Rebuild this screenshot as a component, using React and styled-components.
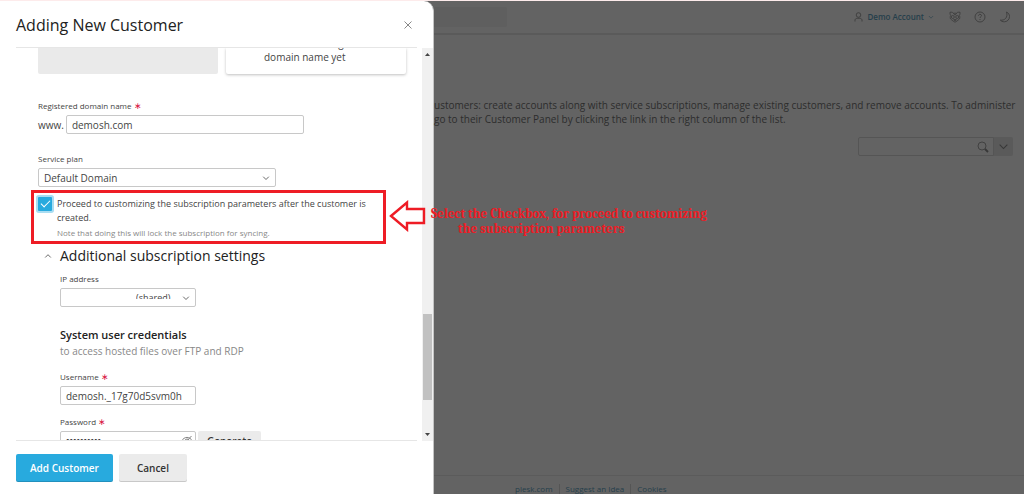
import styled, { createGlobalStyle } from 'styled-components';

const GlobalStyle = createGlobalStyle`
  * {
    box-sizing: border-box;
  }

  body {
    margin: 0;
    background-color: #636363;
    color: #444;
    font-family: 'Open Sans', 'Noto Sans', sans-serif;
    font-size: 10px;
    line-height: 14px;
  }

  h1, h2, h3, p {
    margin: 0;
    font-weight: 400;
  }

  button, input, select {
    font: inherit;
    color: inherit;
  }
`;

const StyledScreen = styled.div`
  display: flex;
  height: 100vh;
  overflow: hidden;
  border-top: 1px solid #fdebeb;
`;

/* drawer */

const StyledDrawer = styled.section`
  display: flex;
  flex-direction: column;
  flex: 0 0 434px;
  min-width: 0;
  background-color: #fff;
  border-right: 1px solid #c4c4c4;
  border-top-right-radius: 10px;
`;

const StyledDrawerHeader = styled.header`
  display: flex;
  justify-content: space-between;
  align-items: center;
  height: 47px;
  margin: 0 16px;
  padding-top: 2px;
  border-bottom: 1px solid #e6e6e6;
`;

const StyledDrawerTitle = styled.h1`
  font-size: 16px;
  line-height: 24px;
  color: #222;
`;

const StyledCloseButton = styled.button`
  display: flex;
  padding: 4px;
  border: none;
  background: none;
  color: #888;
`;

const StyledDrawerBody = styled.div`
  display: flex;
  flex: 1;
  min-height: 0;
`;

const StyledScrollArea = styled.div`
  display: flex;
  flex-direction: column;
  flex: 1;
  min-width: 0;
  margin-left: 16px;
  overflow: hidden;
  border-bottom: 1px solid #e6e6e6;
`;

const StyledScrollbar = styled.div`
  display: flex;
  flex-direction: column;
  align-items: center;
  width: 11px;
  margin-left: 5px;
  background-color: #f0f0f0;
`;

const StyledScrollTriangle = styled.svg`
  flex: none;
  width: 11px;
  height: 13px;
  fill: #444;
`;

const StyledScrollTrack = styled.div`
  flex: 1;
  display: grid;
  grid-template-rows: 253fr 86fr 28fr;
  width: 9px;
`;

const StyledScrollThumb = styled.div`
  grid-row: 2;
  background-color: #c1c1c1;
`;

const StyledCards = styled.div`
  display: flex;
  flex: none;
  gap: 8px;
  height: 26px;
  padding: 0 11px 0 22px;
`;

const StyledCard = styled.div`
  flex: 1;
  min-width: 0;
  display: flex;
  flex-direction: column;
  justify-content: flex-end;
  padding: 0 0 10px 38px;
  white-space: nowrap;
  border-radius: 0 0 2px 2px;
  background-color: ${({ $selected }) => ($selected ? '#eaeaea' : '#fff')};
  box-shadow: ${({ $selected }) =>
    $selected ? 'none' : '0 1px 3px rgba(0, 0, 0, 0.25)'};
`;

const StyledForm = styled.div`
  display: flex;
  flex-direction: column;
  flex: none;
  padding: 24px 11px 0 22px;
`;

const StyledField = styled.div`
  display: flex;
  flex-direction: column;
  align-items: flex-start;
  gap: 1px;
  margin-bottom: ${({ $gap }) => $gap || 0}px;
`;

const StyledLabel = styled.label`
  font-size: 8px;
  line-height: 16px;
`;

const StyledAsterisk = styled.span`
  font-size: 9px;
  line-height: 8px;
  color: #d8123f;
`;

const StyledInputRow = styled.div`
  display: flex;
  align-items: center;
  gap: 2px;
`;

const StyledInput = styled.input`
  width: ${({ $width }) => $width}px;
  height: 19px;
  padding: 0 5px;
  border: 1px solid #c8c8c8;
  border-radius: 2px;
  background-color: #fff;
  outline: none;
`;

const StyledPasswordInput = styled(StyledInput)`
  font-family: 'Liberation Sans', sans-serif;
  font-size: 10px;
  color: #222;
`;

const StyledSelectBox = styled.div`
  display: grid;
  align-items: center;
  width: ${({ $width }) => $width}px;

  > * {
    grid-area: 1 / 1;
  }

  > svg {
    justify-self: end;
    margin-right: 6px;
    pointer-events: none;
  }
`;

const StyledSelect = styled.select`
  appearance: none;
  width: 100%;
  height: 19px;
  padding: 0 5px;
  border: 1px solid #c8c8c8;
  border-radius: 2px;
  background-color: #fff;
`;

const StyledSharedSelect = styled(StyledSelect)`
  padding-left: 75px;
  font-size: 9px;
`;

/* blanks out the lower half of the address */
const StyledRedaction = styled.span`
  display: grid;
  justify-self: start;
  grid-template-rows: 5px 3px;
  width: 38px;
  margin-left: 74px;
  pointer-events: none;

  &::before {
    content: '';
    grid-row: 2;
    background-color: #fff;
  }
`;

const StyledHighlight = styled.div`
  display: flex;
  gap: 5px;
  margin: 3px 20px 0 -7px;
  padding: 4px 0 0 4px;
  height: 54px;
  border: 3px solid #ee1c25;
`;

const StyledCheckbox = styled.input`
  appearance: none;
  display: grid;
  place-items: center;
  flex: none;
  width: 14px;
  height: 14px;
  margin: 0;
  border-radius: 1px;
  background-color: #28aade;
  box-shadow: 0 0 0 2px #a9ddf2;

  &::before {
    content: '';
    width: 8px;
    height: 4px;
    margin-bottom: 3px;
    border-left: 1px solid #fff;
    border-bottom: 1px solid #fff;
    transform: rotate(-45deg);
  }
`;

const StyledCheckboxText = styled.label`
  flex: 1;
  font-size: 9px;
  line-height: 14px;
`;

const StyledNote = styled.span`
  display: block;
  font-size: 8px;
  line-height: 16px;
  color: #888;
`;

const StyledSectionToggle = styled.button`
  display: flex;
  align-items: center;
  gap: 8px;
  padding: 0 0 0 6px;
  border: none;
  background: none;
`;

const StyledSectionTitle = styled.h2`
  font-size: 14px;
  line-height: 24px;
  font-weight: 500;
  color: #222;
`;

const StyledSection = styled.div`
  display: flex;
  flex-direction: column;
  padding: 3px 0 0 22px;
`;

const StyledSubtitle = styled.h3`
  font-size: 11px;
  line-height: 16px;
  font-weight: 600;
  color: #222;
`;

const StyledHint = styled.p`
  margin-bottom: 10px;
  line-height: 16px;
  color: #888;
`;

const StyledPassword = styled.div`
  display: grid;
  align-items: center;

  > * {
    grid-area: 1 / 1;
  }

  > svg {
    justify-self: end;
    margin-right: 3px;
  }
`;

const StyledDrawerFooter = styled.footer`
  display: flex;
  gap: 6px;
  padding: 13px 16px 12px;
`;

const StyledButton = styled.button`
  height: 28px;
  padding: 0 ${({ $primary }) => ($primary ? 14 : 18)}px;
  border: none;
  border-radius: 2px;
  font-weight: 600;
  color: ${({ $primary }) => ($primary ? '#fff' : '#333')};
  background-color: ${({ $primary }) => ($primary ? '#28aade' : '#ebebeb')};
  box-shadow: inset 0 -1px rgba(0, 0, 0, 0.15);
`;

const StyledSmallButton = styled(StyledButton)`
  height: 19px;
  padding: 0 9px;
`;

/* page behind the drawer */

const StyledPage = styled.div`
  display: flex;
  flex-direction: column;
  flex: 1;
  min-width: 0;
  color: #2d2d2d;
`;

const StyledTopBar = styled.header`
  display: flex;
  justify-content: space-between;
  align-items: center;
  height: 34px;
  padding-right: 13px;
  border-bottom: 2px solid #5a5a5a;
`;

const StyledTopSearch = styled.input`
  width: 73px;
  height: 20px;
  border: none;
  border-radius: 0 2px 2px 0;
  background-color: #5f5f5f;
`;

const StyledTopActions = styled.div`
  display: flex;
  align-items: center;
  gap: 13px;
`;

const StyledAccountButton = styled.button`
  display: flex;
  align-items: center;
  gap: 4px;
  padding: 0 2px 0 0;
  border: none;
  background: none;
  font-size: 8px;
  font-weight: 600;
  color: #263f4b;
`;

const StyledIconButton = styled.button`
  display: flex;
  padding: 0;
  border: none;
  background: none;
  color: #383838;
`;

const StyledMain = styled.main`
  display: flex;
  flex-direction: column;
  flex: 1;
  padding: 63px 11px 0 0;
`;

const StyledDescription = styled.p`
  white-space: nowrap;
`;

const StyledListSearch = styled.form`
  display: flex;
  align-self: flex-end;
  margin-top: 11px;
`;

const StyledListSearchBox = styled.div`
  display: flex;
  align-items: center;
  width: 136px;
  height: 19px;
  padding-right: 4px;
  border: 1px solid #555;
  border-radius: 2px 0 0 2px;
`;

const StyledListSearchInput = styled.input`
  flex: 1;
  min-width: 0;
  border: none;
  background: none;
`;

const StyledListSearchMore = styled.button`
  display: grid;
  place-items: center;
  width: 19px;
  padding: 0;
  border: none;
  border-radius: 0 2px 2px 0;
  background-color: #5a5a5a;
  color: #383838;
`;

const StyledPageFooter = styled.footer`
  display: flex;
  align-items: center;
  height: 19px;
  padding: 8px 0 0 81px;
  border-top: 1px solid #5b5b5b;
  font-size: 8px;
  line-height: 10px;
`;

const StyledFooterLink = styled.a`
  padding-right: 6px;
  margin-right: 6px;
  color: #263f4b;
  text-decoration: none;
  border-right: 1px solid #555;

  &:last-child {
    border: none;
  }
`;

/* callout laid over both the drawer and the page */

const StyledCallout = styled.aside`
  position: absolute;
  top: 200px;
  left: 389px;
  display: flex;
  gap: 5px;
`;

const StyledCalloutText = styled.p`
  padding-top: 6px;
  font-family: Cambria, 'Liberation Serif', serif;
  font-size: 13px;
  line-height: 15px;
  font-weight: 700;
  color: #ee1c25;
`;

const StyledCalloutSecondLine = styled.span`
  display: block;
  padding-left: 27px;
`;

function Chevron({ up, size = 8 }) {
  return (
    <svg width={size} height={size} viewBox="0 0 8 8" fill="none" stroke="currentColor">
      <path d={up ? 'M1.2 5.5 4 2.7l2.8 2.8' : 'M1.2 2.7 4 5.5l2.8-2.8'} strokeWidth="0.8" />
    </svg>
  );
}

function Label({ htmlFor, required, children }) {
  return (
    <StyledLabel htmlFor={htmlFor}>
      {children} {required && <StyledAsterisk>∗</StyledAsterisk>}
    </StyledLabel>
  );
}

function CustomerForm() {
  return (
    <StyledScrollArea>
      <StyledCards>
        <StyledCard $selected />
        <StyledCard>
          <span>I don’t have a registered</span>
          <span>domain name yet</span>
        </StyledCard>
      </StyledCards>
      <StyledForm>
        <StyledField $gap={17}>
          <Label htmlFor="domain" required>Registered domain name</Label>
          <StyledInputRow>
            <span>www.</span>
            <StyledInput id="domain" $width={238} defaultValue="demosh.com" />
          </StyledInputRow>
        </StyledField>
        <StyledField>
          <Label htmlFor="plan">Service plan</Label>
          <StyledSelectBox $width={238}>
            <StyledSelect id="plan">
              <option>Default Domain</option>
            </StyledSelect>
            <Chevron />
          </StyledSelectBox>
        </StyledField>
        <StyledHighlight>
          <StyledCheckbox id="customize" type="checkbox" defaultChecked />
          <StyledCheckboxText htmlFor="customize">
            Proceed to customizing the subscription parameters after the customer is
            <br />
            created.
            <StyledNote>
              Note that doing this will lock the subscription for syncing.
            </StyledNote>
          </StyledCheckboxText>
        </StyledHighlight>
        <StyledSectionToggle type="button">
          <Chevron up />
          <StyledSectionTitle>Additional subscription settings</StyledSectionTitle>
        </StyledSectionToggle>
        <StyledSection>
          <StyledField $gap={20}>
            <Label htmlFor="ip">IP address</Label>
            <StyledSelectBox $width={136}>
              <StyledSharedSelect id="ip">
                <option>(shared)</option>
              </StyledSharedSelect>
              <StyledRedaction />
              <Chevron />
            </StyledSelectBox>
          </StyledField>
          <StyledSubtitle>System user credentials</StyledSubtitle>
          <StyledHint>to access hosted files over FTP and RDP</StyledHint>
          <StyledField $gap={9}>
            <Label htmlFor="username" required>Username</Label>
            <StyledInput id="username" $width={136} defaultValue="demosh._17g70d5svm0h" />
          </StyledField>
          <StyledField>
            <Label htmlFor="password" required>Password</Label>
            <StyledInputRow>
              <StyledPassword>
                <StyledPasswordInput id="password" type="password" $width={136} defaultValue="plesk12345" />
                <svg width="12" height="12" viewBox="0 0 12 12" fill="none" stroke="#777" strokeWidth="0.9">
                  <path d="M.6 6C2 3.600 4 2.400 6 2.400s4 1.200 5.400 3.600C10 8.400 8 9.600 6 9.600S2 8.400.6 6ZM1.500 10.500l9-9.500" />
                  <circle cx="6" cy="6" r="2" />
                </svg>
              </StyledPassword>
              <StyledSmallButton type="button">Generate</StyledSmallButton>
            </StyledInputRow>
          </StyledField>
        </StyledSection>
      </StyledForm>
    </StyledScrollArea>
  );
}

function Drawer() {
  return (
    <StyledDrawer>
      <StyledDrawerHeader>
        <StyledDrawerTitle>Adding New Customer</StyledDrawerTitle>
        <StyledCloseButton type="button" aria-label="Close">
          <svg width="10" height="10" viewBox="0 0 10 10" stroke="currentColor">
            <path d="m1.5 1.5 7 7m0-7-7 7" />
          </svg>
        </StyledCloseButton>
      </StyledDrawerHeader>
      <StyledDrawerBody>
        <CustomerForm />
        <StyledScrollbar>
          <StyledScrollTriangle viewBox="0 0 11 13">
            <path d="M3 8h5L5.5 5Z" />
          </StyledScrollTriangle>
          <StyledScrollTrack>
            <StyledScrollThumb />
          </StyledScrollTrack>
          <StyledScrollTriangle viewBox="0 0 11 13">
            <path d="M3 5h5L5.5 8Z" />
          </StyledScrollTriangle>
        </StyledScrollbar>
      </StyledDrawerBody>
      <StyledDrawerFooter>
        <StyledButton type="button" $primary>Add Customer</StyledButton>
        <StyledButton type="button">Cancel</StyledButton>
      </StyledDrawerFooter>
    </StyledDrawer>
  );
}

function TopBar() {
  return (
    <StyledTopBar>
      <StyledTopSearch aria-label="Search" />
      <StyledTopActions>
        <StyledAccountButton type="button">
          <svg width="9" height="10" viewBox="0 0 9 10" fill="none" stroke="#383838" strokeWidth="0.8">
            <circle cx="4.5" cy="3" r="2.3" />
            <path d="M1 9.5V8.3C1 7 2 6.3 3.2 6.3h2.6C7 6.3 8 7 8 8.3v1.2" />
          </svg>
          Demo Account
          <Chevron size={6} />
        </StyledAccountButton>
        <StyledIconButton type="button" aria-label="Mascot">
          <svg width="12" height="12" viewBox="0 0 12 12" fill="none" stroke="currentColor" strokeWidth="0.7">
            <path d="M1.8 4.2 1 3.2V1.2h2.2l1.200 1h3.200l1.200-1H11v2l-.8 1M1.800 4.200C1 5.500 1 7 1.600 8L4 10l2 1.200L8 10l2.400-2C11 7 11 5.500 10.200 4.200M4.400 2.200 6 4.200l1.600-2M4.700 8.600h2.600L6 9.800Z" />
            <circle cx="3.8" cy="6" r="1.5" />
            <circle cx="8.2" cy="6" r="1.5" />
          </svg>
        </StyledIconButton>
        <StyledIconButton type="button" aria-label="Help">
          <svg width="12" height="12" viewBox="0 0 12 12" fill="none" stroke="currentColor" strokeWidth="0.8">
            <circle cx="6" cy="6" r="5" />
            <path d="M4.5 4.8C4.5 3.8 5.2 3.3 6 3.3s1.5.5 1.5 1.3C7.5 5.7 6 5.7 6 7M6 8v1" />
          </svg>
        </StyledIconButton>
        <StyledIconButton type="button" aria-label="Dark mode">
          <svg width="12" height="12" viewBox="0 0 12 12" fill="none" stroke="currentColor" strokeWidth="0.8">
            <path d="M7.5 1C9.5 2 10.5 3.5 10.5 5.5c0 3-2.3 5.3-5.2 5.3-1.7 0-3-.6-4-1.7C5.5 9.8 9.3 6.5 7.5 1Z" />
          </svg>
        </StyledIconButton>
      </StyledTopActions>
    </StyledTopBar>
  );
}

export default function App() {
  return (
    <>
      <GlobalStyle />
      <StyledScreen>
        <Drawer />
        <StyledPage>
          <TopBar />
          <StyledMain>
            <StyledDescription>
              ustomers: create accounts along with service subscriptions, manage existing customers, and remove accounts. To administer
              <br />
              go to their Customer Panel by clicking the link in the right column of the list.
            </StyledDescription>
            <StyledListSearch>
              <StyledListSearchBox>
                <StyledListSearchInput aria-label="Search customers" />
                <svg width="12" height="12" viewBox="0 0 12 12" fill="none" stroke="#383838" strokeWidth="0.8">
                  <circle cx="5" cy="5" r="4" />
                  <path d="m8 8 3 3" strokeWidth="1.8" />
                </svg>
              </StyledListSearchBox>
              <StyledListSearchMore type="button" aria-label="More filters">
                <Chevron size={11} />
              </StyledListSearchMore>
            </StyledListSearch>
          </StyledMain>
          <StyledPageFooter>
            <StyledFooterLink href="#plesk">plesk.com</StyledFooterLink>
            <StyledFooterLink href="#idea">Suggest an Idea</StyledFooterLink>
            <StyledFooterLink href="#cookies">Cookies</StyledFooterLink>
          </StyledPageFooter>
        </StyledPage>
        <StyledCallout>
          <svg width="37" height="32" viewBox="0 0 37 32" fill="none" stroke="#ee1c25" strokeWidth="2.4">
            <path d="M2 16 18 2.5V9h17v14H18v6.5Z" />
          </svg>
          <StyledCalloutText>
            Select the Checkbox, for proceed to customizing
            <StyledCalloutSecondLine>the subscription parameters</StyledCalloutSecondLine>
          </StyledCalloutText>
        </StyledCallout>
      </StyledScreen>
    </>
  );
}
